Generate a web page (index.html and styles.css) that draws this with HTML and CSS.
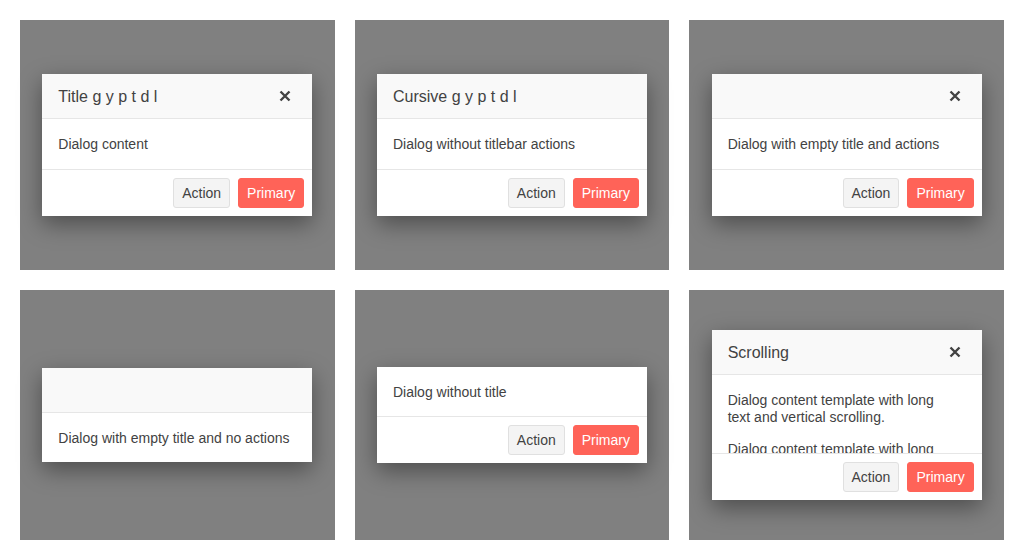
FILE: index.html
```html
<!DOCTYPE html>
<html>
<head>
<meta charset="utf-8">
<link rel="stylesheet" href="styles.css">
</head>
<body>
<div class="grid">
  <div class="stage">
    <div class="dialog">
      <div class="titlebar"><span class="title">Title g y p t d l</span><span class="close"><svg width="12" height="12" viewBox="0 0 12 12"><path d="M1.5 1.5L10.5 10.5M10.5 1.5L1.5 10.5" stroke="#424242" stroke-width="2.4"/></svg></span></div>
      <div class="content">Dialog content</div>
      <div class="actions"><button class="btn">Action</button><button class="btn primary">Primary</button></div>
    </div>
  </div>
  <div class="stage">
    <div class="dialog">
      <div class="titlebar"><span class="title">Cursive g y p t d l</span></div>
      <div class="content">Dialog without titlebar actions</div>
      <div class="actions"><button class="btn">Action</button><button class="btn primary">Primary</button></div>
    </div>
  </div>
  <div class="stage">
    <div class="dialog">
      <div class="titlebar"><span class="title"></span><span class="close"><svg width="12" height="12" viewBox="0 0 12 12"><path d="M1.5 1.5L10.5 10.5M10.5 1.5L1.5 10.5" stroke="#424242" stroke-width="2.4"/></svg></span></div>
      <div class="content">Dialog with empty title and actions</div>
      <div class="actions"><button class="btn">Action</button><button class="btn primary">Primary</button></div>
    </div>
  </div>
  <div class="stage">
    <div class="dialog">
      <div class="titlebar"><span class="title"></span></div>
      <div class="content">Dialog with empty title and no actions</div>
    </div>
  </div>
  <div class="stage">
    <div class="dialog">
      <div class="content">Dialog without title</div>
      <div class="actions"><button class="btn">Action</button><button class="btn primary">Primary</button></div>
    </div>
  </div>
  <div class="stage">
    <div class="dialog">
      <div class="titlebar"><span class="title">Scrolling</span><span class="close"><svg width="12" height="12" viewBox="0 0 12 12"><path d="M1.5 1.5L10.5 10.5M10.5 1.5L1.5 10.5" stroke="#424242" stroke-width="2.4"/></svg></span></div>
      <div class="content scroll">
        <p>Dialog content template with long text and vertical scrolling.</p>
        <p>Dialog content template with long text and vertical scrolling.</p>
      </div>
      <div class="actions"><button class="btn">Action</button><button class="btn primary">Primary</button></div>
    </div>
  </div>
</div>
</body>
</html>
```
FILE: styles.css
```css
html, body {
  margin: 0;
  padding: 0;
  background: #fff;
}
body {
  font-family: "Liberation Sans", Arial, sans-serif;
  font-size: 14px;
  color: #424242;
}
.grid {
  display: grid;
  grid-template-columns: repeat(3, 1fr);
  grid-template-rows: 250px 250px;
  gap: 20px;
  padding: 20px;
}
.stage {
  background: #808080;
  display: flex;
  align-items: center;
  justify-content: center;
}
.dialog {
  width: 270px;
  background: #fff;
  box-shadow: 0 8px 22px rgba(0, 0, 0, 0.4);
  display: flex;
  flex-direction: column;
}
.titlebar {
  height: 44px;
  border-bottom: 1px solid #e6e6e6;
  background: #f9f9f9;
  display: flex;
  align-items: center;
  justify-content: space-between;
  padding: 0 21px 0 16px;
}
.title {
  font-size: 16px;
  line-height: 20px;
  padding-top: 2px;
}
.close {
  display: flex;
  width: 12px;
  height: 12px;
}
.content {
  padding: 17px 16px 15.5px;
  line-height: 17px;
}
.scroll {
  height: 45px;
  overflow: hidden;
  padding-right: 32px;
}
.scroll p {
  margin: 0 0 15px;
}
.actions {
  border-top: 1px solid #e6e6e6;
  padding: 8px;
  display: flex;
  justify-content: flex-end;
  gap: 8px;
}
.btn {
  font: inherit;
  font-size: 14px;
  height: 30px;
  padding: 0 8px;
  border: 1px solid #e0e0e0;
  border-radius: 3px;
  background: #f4f4f4;
  color: #424242;
}
.primary {
  background: #ff6358;
  border-color: #ff6358;
  color: #fff;
}
```
